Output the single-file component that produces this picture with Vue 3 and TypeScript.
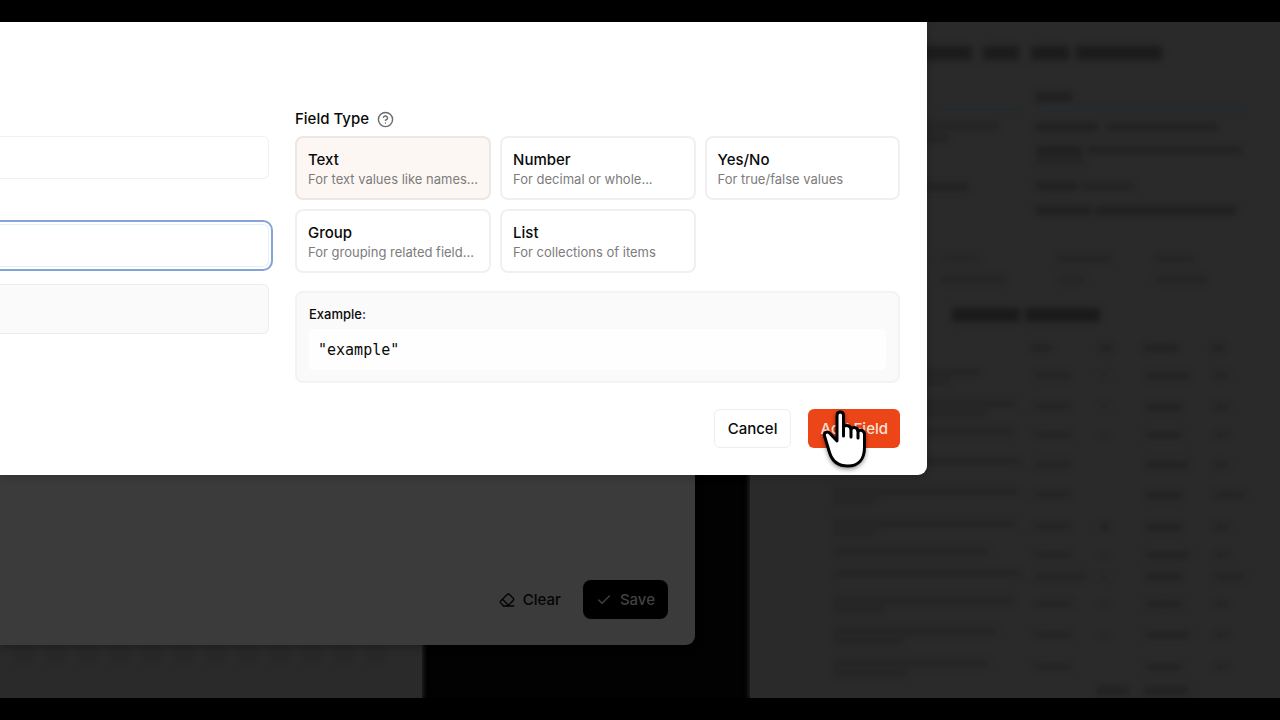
<script setup lang="ts">
import { ref } from 'vue'

interface FieldType {
  name: string
  hint: string
}

// x, y, width, height, opacity
type Bar = [number, number, number, number, number]

const fieldTypes: FieldType[] = [
  { name: 'Text', hint: 'For text values like names...' },
  { name: 'Number', hint: 'For decimal or whole...' },
  { name: 'Yes/No', hint: 'For true/false values' },
  { name: 'Group', hint: 'For grouping related field...' },
  { name: 'List', hint: 'For collections of items' },
]

const selected = ref('Text')
const fieldName = ref('')
const fieldDescription = ref('')

const bars: Bar[] = [
  [170, 24, 52, 14, 0.7], [233, 24, 36, 14, 0.7], [281, 24, 38, 14, 0.7], [326, 24, 86, 14, 0.7],
  [286, 70, 36, 10, 0.5],
  [170, 100, 78, 8, 0.25], [170, 112, 28, 8, 0.3],
  [286, 101, 62, 8, 0.45], [356, 101, 112, 8, 0.35],
  [286, 124, 46, 9, 0.5], [338, 124, 154, 8, 0.35], [286, 135, 48, 8, 0.25],
  [170, 161, 48, 8, 0.35], [286, 160, 42, 8, 0.45], [332, 160, 52, 8, 0.3],
  [286, 184, 56, 9, 0.45], [346, 184, 140, 9, 0.45],
  [190, 233, 40, 7, 0.2], [306, 233, 56, 7, 0.25], [406, 233, 38, 7, 0.25],
  [190, 254, 66, 7, 0.25], [308, 254, 26, 7, 0.2], [406, 254, 52, 7, 0.25],
  [202, 286, 68, 14, 0.75], [275, 286, 75, 14, 0.75],
  [280, 322, 22, 8, 0.3], [350, 322, 12, 8, 0.35], [394, 322, 34, 8, 0.35], [462, 322, 12, 8, 0.35],
]

const leftWidths: [number, number][] = [
  [146, 116], [180, 152], [180, 0], [186, 0], [185, 42],
  [180, 42], [154, 0], [186, 0], [180, 50], [162, 70], [154, 72],
]
const rowTops = [349, 380, 408, 438, 468, 500, 528, 550, 577, 608, 640]

rowTops.forEach((y, i) => {
  const [first, second] = leftWidths[i]
  bars.push([84, y - 2, first, 7, 0.28])
  if (second) bars.push([84, y + 7, second, 7, 0.28])
  bars.push([285, y + 1, i === 7 ? 52 : 37, 7, 0.28])
  if (i !== 3 && i !== 4 && i !== 10) bars.push([350, y + 1, 9, 7, i === 5 ? 0.4 : 0.14])
  bars.push([396, y + 1, i % 3 === 0 ? 43 : 36, 8, 0.32])
  bars.push([464, y + 1, i === 4 || i === 7 ? 30 : 14, 7, 0.28])
})
bars.push([347, 664, 32, 9, 0.35], [394, 664, 44, 9, 0.35])
</script>

<template>
  <div class="screen">
    <div class="stage">
      <div class="backdrop" aria-hidden="true">
        <div class="page page-left">
          <span v-for="n in 12" :key="n" class="mark"></span>
        </div>
        <div class="page page-right">
          <svg width="532" height="676" viewBox="0 0 532 676">
            <g class="ink">
              <rect
                v-for="(b, i) in bars"
                :key="i"
                :x="b[0]"
                :y="b[1]"
                :width="b[2]"
                :height="b[3]"
                :fill-opacity="b[4]"
              />
            </g>
            <g class="rule">
              <rect x="190" y="85" width="80" height="4" />
              <rect x="290" y="84" width="205" height="5" />
            </g>
          </svg>
        </div>
      </div>

      <section class="panel">
        <button type="button" class="btn clear">
          <svg class="icon" viewBox="0 0 24 24">
            <path d="m7 21-4.3-4.3c-1-1-1-2.500 0-3.400l9.600-9.600c1-1 2.500-1 3.400 0l5.600 5.600c1 1 1 2.500 0 3.400L13 21" />
            <path d="M22 21H7" />
            <path d="m5 11 9 9" />
          </svg>
          Clear
        </button>
        <button type="button" class="btn save">
          <svg class="icon" viewBox="0 0 24 24"><path d="M20 6 9 17l-5-5" /></svg>
          Save
        </button>
      </section>

      <section class="dialog" role="dialog" aria-label="Field">
        <div class="columns">
          <div class="inputs">
            <input v-model="fieldName" class="box" type="text" aria-label="Field name" />
            <input v-model="fieldDescription" class="box active" type="text" aria-label="Field description" />
            <div class="note"></div>
          </div>
          <div class="types">
            <div class="heading">
              Field Type
              <svg class="help" viewBox="0 0 24 24">
                <circle cx="12" cy="12" r="10" />
                <path d="M9.090 9a3 3 0 0 1 5.830 1c0 2-3 3-3 3M12 17h.01" />
              </svg>
            </div>
            <div class="cards">
              <button
                v-for="t in fieldTypes"
                :key="t.name"
                type="button"
                class="card"
                :class="{ chosen: selected === t.name }"
                :aria-pressed="selected === t.name"
                @click="selected = t.name"
              >
                <span class="name">{{ t.name }}</span>
                <span class="hint">{{ t.hint }}</span>
              </button>
            </div>
            <div class="example">
              <div class="caption">Example:</div>
              <pre class="code">"example"</pre>
            </div>
          </div>
        </div>
        <div class="actions">
          <button type="button" class="btn cancel">Cancel</button>
          <div class="submit">
            <button type="button" class="btn add">Add Field</button>
            <svg class="pointer" viewBox="0 0 46 60" aria-hidden="true">
              <path
                class="hand"
                d="M16 32V6.500C16 1.800 22.500 1.800 22.500 6.500V18C24.500 15.500 29.500 16.500 30 20C32.500 17.500 36.500 18.500 37 22C40 20 43.500 22 43.500 25.500V38C43.500 50 37.500 57 27 57C16.500 57 11 52 8.500 43.500L3.500 27C2.500 23.500 6.500 21.500 9 24.500Z"
              />
              <path class="fingers" d="M22.500 17v10M30 19v9M37 21v8" />
            </svg>
          </div>
        </div>
      </section>
    </div>
  </div>
</template>

<style>
body {
  margin: 0;
  background: #000;
}
</style>

<style scoped>
.screen {
  box-sizing: border-box;
  min-height: 100vh;
  padding: 22px 0;
  background: #000;
  font-family: Inter, "Liberation Sans", sans-serif;
  color: #0a0a0a;
  display: flex;
}
.stage {
  position: relative;
  flex: 1;
  overflow: hidden;
  background: #020202;
}
.backdrop {
  position: absolute;
  inset: 0;
  display: flex;
  justify-content: space-between;
}
.page {
  background: #2a2a2a;
  box-shadow: 0 0 5px 1px #2a2a2a;
}
.page-left {
  width: 33%;
  display: flex;
  align-items: flex-end;
  gap: 16px;
  box-sizing: border-box;
  padding: 0 0 35px 15px;
  overflow: hidden;
}
.mark {
  width: 16px;
  height: 18px;
  flex: none;
  background: #282828;
  filter: blur(2px);
}
.page-right {
  width: 530px;
}
.page-right svg {
  display: block;
}
.ink {
  fill: #151515;
  filter: blur(3px);
}
.rule {
  fill: #252c2f;
  filter: blur(2px);
}
.panel {
  position: absolute;
  left: 0;
  right: 585px;
  top: 0;
  bottom: 53px;
  box-sizing: border-box;
  padding: 26px 27px;
  display: flex;
  justify-content: flex-end;
  align-items: flex-end;
  gap: 9px;
  background: #3b3b3b;
  border-radius: 0 0 9px 0;
  box-shadow: 0 2px 10px rgba(0, 0, 0, 0.3);
}
.btn {
  height: 39px;
  padding: 0 13px;
  border: 0;
  border-radius: 6px;
  font: 500 15px/20px Inter, "Liberation Sans", sans-serif;
  display: flex;
  align-items: center;
  gap: 8px;
}
.icon {
  width: 16px;
  height: 16px;
  fill: none;
  stroke: currentColor;
  stroke-width: 2;
  stroke-linecap: round;
  stroke-linejoin: round;
}
.clear {
  background: transparent;
  color: #030303;
}
.save {
  background: #000;
  color: #424242;
  border-radius: 8px;
}
.dialog {
  position: absolute;
  left: 0;
  right: 353px;
  top: 0;
  box-sizing: border-box;
  padding: 87px 27px 27px 0;
  background: #fff;
  border-radius: 0 0 9px 0;
  box-shadow: 0 2px 8px rgba(0, 0, 0, 0.2);
}
.columns {
  display: flex;
  gap: 26px;
}
.inputs {
  flex: 1;
  display: flex;
  flex-direction: column;
  padding-top: 27px;
}
.box {
  box-sizing: border-box;
  width: 100%;
  height: 43px;
  margin: 0 0 45px;
  padding: 0 12px;
  border: 1px solid #f1f1f1;
  border-left: 0;
  border-radius: 0 6px 6px 0;
  background: #fff;
  font: 400 15px/20px Inter, sans-serif;
  outline: none;
}
.active {
  margin-bottom: 17px;
  border-color: #e3f0f6;
  outline: 2px solid #84a3d6;
  outline-offset: 2px;
}
.note {
  height: 48px;
  border: 1px solid #eee;
  border-left: 0;
  border-radius: 0 6px 6px 0;
  background: #fafafa;
}
.types {
  width: 605px;
}
.heading {
  display: flex;
  align-items: center;
  gap: 8px;
  height: 20px;
  margin-bottom: 7px;
  font-size: 15px;
  font-weight: 500;
  line-height: 20px;
}
.help {
  width: 17px;
  height: 17px;
  fill: none;
  stroke: #6b6b6b;
  stroke-width: 2;
  stroke-linecap: round;
  stroke-linejoin: round;
}
.cards {
  display: grid;
  grid-template-columns: repeat(3, 1fr);
  gap: 9px;
}
.card {
  box-sizing: border-box;
  height: 64px;
  padding: 3px 11px 0;
  border: 2px solid #f0f0f1;
  border-radius: 8px;
  background: #fff;
  text-align: left;
  font-family: inherit;
  color: inherit;
  white-space: nowrap;
}
.chosen {
  background: #fdf7f4;
  border-color: #eee6e6;
}
.name,
.hint {
  display: block;
}
.name {
  font-size: 15px;
  font-weight: 500;
  line-height: 19px;
}
.hint {
  font-size: 13px;
  line-height: 20px;
  color: #7c7c7c;
}
.example {
  margin-top: 18px;
  padding: 11px 12px;
  border: 2px solid #f3f3f3;
  border-radius: 8px;
  background: #fafafa;
}
.caption {
  font-size: 13px;
  font-weight: 500;
  line-height: 20px;
}
.code {
  margin: 5px 0 0;
  padding: 11px 9px 10px;
  border-radius: 4px;
  background: #fefefe;
  font: 15px/20px "DejaVu Sans Mono", monospace;
}
.actions {
  display: flex;
  justify-content: flex-end;
  gap: 17px;
  margin-top: 26px;
}
.cancel {
  border: 1px solid #eee;
  background: #fff;
  color: #0a0a0a;
}
.submit {
  position: relative;
}
.add {
  padding: 0 12px;
  background: #ec4517;
  color: #fde3d8;
}
.pointer {
  position: absolute;
  right: 33px;
  top: 0;
  width: 46px;
  height: 60px;
  overflow: visible;
  pointer-events: none;
  filter: drop-shadow(0 2px 2px rgba(0, 0, 0, 0.4));
}
.hand {
  fill: #fff;
  stroke: #000;
  stroke-width: 3;
  stroke-linejoin: round;
}
.fingers {
  fill: none;
  stroke: #000;
  stroke-width: 3;
  stroke-linecap: round;
}
</style>
